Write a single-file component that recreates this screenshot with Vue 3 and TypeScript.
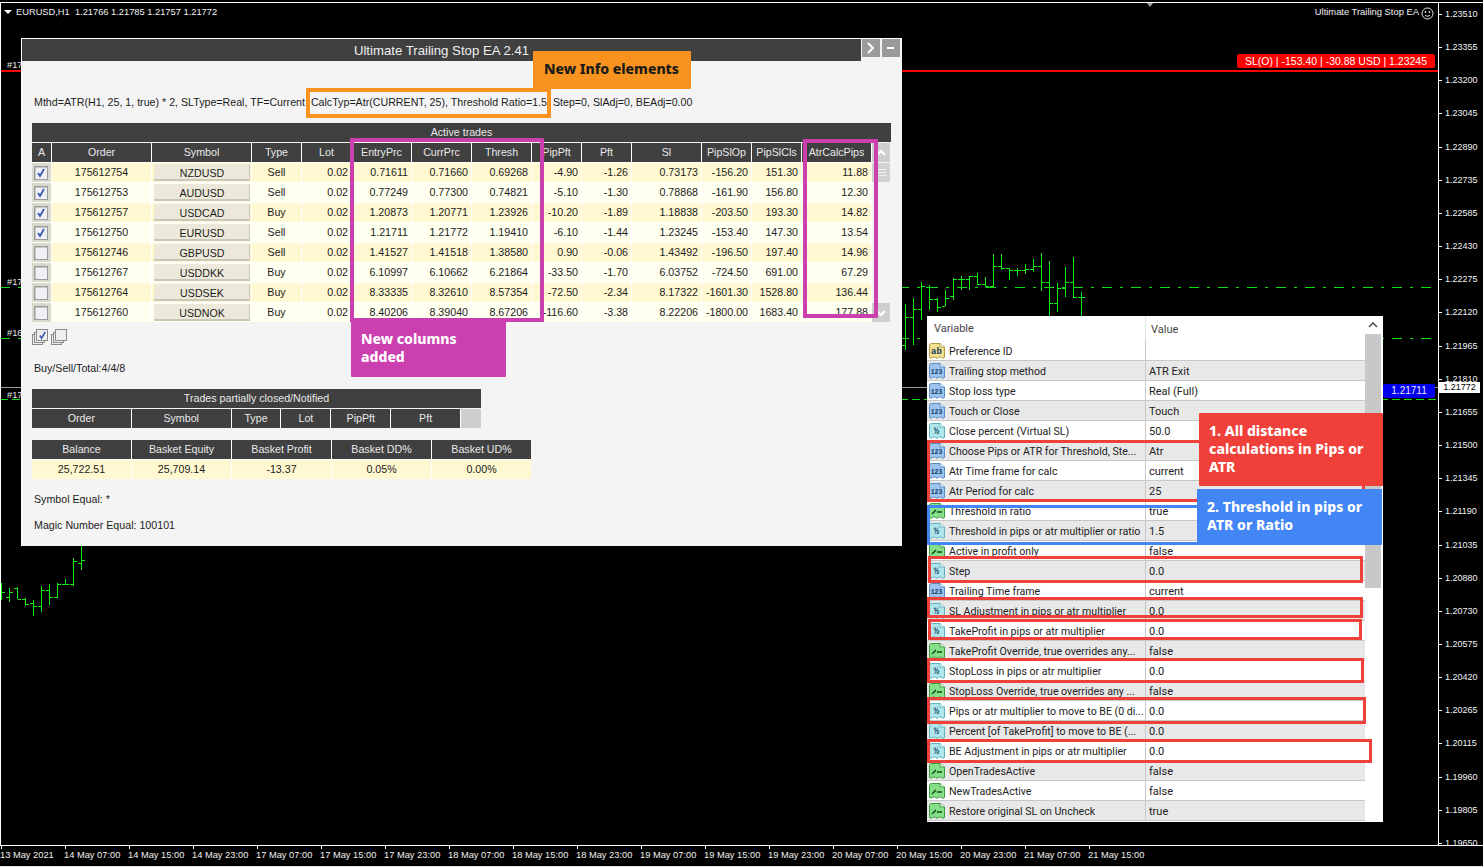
<script setup lang="ts">
type Bar = [number, number, number, number, number]
const bars: Bar[] = [
  [1, 583, 600, 592, 592], [9, 588, 602, 597, 592], [17, 587, 599, 588, 599], [25, 598, 606, 599, 604],
  [33, 600, 616, 603, 606], [41, 586, 612, 606, 590], [49, 584, 605, 590, 597], [57, 583, 598, 597, 584],
  [65, 579, 585, 584, 584], [73, 558, 586, 584, 561], [81, 540, 570, 563, 560], [110, 540, 546, 544, 544],
  [905, 304, 350, 345, 317], [913, 298, 345, 317, 309], [921, 282, 320, 309, 286], [929, 285, 310, 287, 299],
  [937, 298, 312, 299, 307], [945, 290, 306, 306, 298], [953, 278, 300, 296, 279], [961, 276, 290, 279, 279],
  [969, 276, 290, 279, 276], [977, 273, 285, 276, 284], [985, 277, 287, 284, 286], [993, 254, 287, 286, 266],
  [1001, 254, 270, 266, 268], [1009, 268, 280, 268, 270], [1017, 268, 276, 270, 270], [1025, 264, 274, 270, 269],
  [1033, 259, 272, 269, 266], [1041, 253, 291, 266, 282], [1049, 261, 316, 282, 303], [1057, 283, 312, 303, 288],
  [1065, 267, 297, 288, 282], [1073, 257, 298, 282, 297], [1081, 292, 316, 297, 297]
]
const barPath = bars
  .map(([x, h, l, o, c]) => `M${x + 0.5} ${h}V${l}M${x - 3} ${o + 0.5}H${x}M${x + 1} ${c + 0.5}H${x + 4}`)
  .join('')

const prices = ['1.23510','1.23355','1.23200','1.23045','1.22890','1.22735','1.22585','1.22430','1.22275','1.22120','1.21965','1.21810','1.21655','1.21500','1.21345','1.21190','1.21035','1.20880','1.20730','1.20575','1.20420','1.20265','1.20115','1.19960','1.19805','1.19650']
const times = ['13 May 2021','14 May 07:00','14 May 15:00','14 May 23:00','17 May 07:00','17 May 15:00','17 May 23:00','18 May 07:00','18 May 15:00','18 May 23:00','19 May 07:00','19 May 15:00','19 May 23:00','20 May 07:00','20 May 15:00','20 May 23:00','21 May 07:00','21 May 15:00']

const orderLabels = [
  { y: 59, text: '#17' }, { y: 276, text: '#17' }, { y: 327, text: '#16' }, { y: 389, text: '#17' }
]

const headers = ['A','Order','Symbol','Type','Lot','EntryPrc','CurrPrc','Thresh','PipPft','Pft','Sl','PipSlOp','PipSlCls','AtrCalcPips']
const trades = [
  { on: true, order: '175612754', sym: 'NZDUSD', type: 'Sell', nums: ['0.02','0.71611','0.71660','0.69268','-4.90','-1.26','0.73173','-156.20','151.30','11.88'] },
  { on: true, order: '175612753', sym: 'AUDUSD', type: 'Sell', nums: ['0.02','0.77249','0.77300','0.74821','-5.10','-1.30','0.78868','-161.90','156.80','12.30'] },
  { on: true, order: '175612757', sym: 'USDCAD', type: 'Buy', nums: ['0.02','1.20873','1.20771','1.23926','-10.20','-1.89','1.18838','-203.50','193.30','14.82'] },
  { on: true, order: '175612750', sym: 'EURUSD', type: 'Sell', nums: ['0.02','1.21711','1.21772','1.19410','-6.10','-1.44','1.23245','-153.40','147.30','13.54'] },
  { on: false, order: '175612746', sym: 'GBPUSD', type: 'Sell', nums: ['0.02','1.41527','1.41518','1.38580','0.90','-0.06','1.43492','-196.50','197.40','14.96'] },
  { on: false, order: '175612767', sym: 'USDDKK', type: 'Buy', nums: ['0.02','6.10997','6.10662','6.21864','-33.50','-1.70','6.03752','-724.50','691.00','67.29'] },
  { on: false, order: '175612764', sym: 'USDSEK', type: 'Buy', nums: ['0.02','8.33335','8.32610','8.57354','-72.50','-2.34','8.17322','-1601.30','1528.80','136.44'] },
  { on: false, order: '175612760', sym: 'USDNOK', type: 'Buy', nums: ['0.02','8.40206','8.39040','8.67206','-116.60','-3.38','8.22206','-1800.00','1683.40','177.88'] }
]
const closedHeaders = ['Order','Symbol','Type','Lot','PipPft','Pft']
const summaryHeaders = ['Balance','Basket Equity','Basket Profit','Basket DD%','Basket UD%']
const summaryValues = ['25,722.51','25,709.14','-13.37','0.05%','0.00%']

type Kind = 'ab' | 'int' | 'dbl' | 'bool'
const props: { name: string; value: string; kind: Kind }[] = [
  { name: 'Preference ID', value: '', kind: 'ab' },
  { name: 'Trailing stop method', value: 'ATR Exit', kind: 'int' },
  { name: 'Stop loss type', value: 'Real (Full)', kind: 'int' },
  { name: 'Touch or Close', value: 'Touch', kind: 'int' },
  { name: 'Close percent (Virtual SL)', value: '50.0', kind: 'dbl' },
  { name: 'Choose Pips or ATR for Threshold, Ste...', value: 'Atr', kind: 'int' },
  { name: 'Atr Time frame for calc', value: 'current', kind: 'int' },
  { name: 'Atr Period for calc', value: '25', kind: 'int' },
  { name: 'Threshold in ratio', value: 'true', kind: 'bool' },
  { name: 'Threshold in pips or atr multiplier or ratio', value: '1.5', kind: 'dbl' },
  { name: 'Active in profit only', value: 'false', kind: 'bool' },
  { name: 'Step', value: '0.0', kind: 'dbl' },
  { name: 'Trailing Time frame', value: 'current', kind: 'int' },
  { name: 'SL Adjustment in pips or atr multiplier', value: '0.0', kind: 'dbl' },
  { name: 'TakeProfit in pips or atr multiplier', value: '0.0', kind: 'dbl' },
  { name: 'TakeProfit Override, true overrides any...', value: 'false', kind: 'bool' },
  { name: 'StopLoss in pips or atr multiplier', value: '0.0', kind: 'dbl' },
  { name: 'StopLoss Override, true overrides any ...', value: 'false', kind: 'bool' },
  { name: 'Pips or atr multiplier to move to BE (0 di...', value: '0.0', kind: 'dbl' },
  { name: 'Percent [of TakeProfit] to move to BE (...', value: '0.0', kind: 'dbl' },
  { name: 'BE Adjustment in pips or atr multiplier', value: '0.0', kind: 'dbl' },
  { name: 'OpenTradesActive', value: 'false', kind: 'bool' },
  { name: 'NewTradesActive', value: 'false', kind: 'bool' },
  { name: 'Restore original SL on Uncheck', value: 'true', kind: 'bool' }
]

const iconFill: Record<Kind, string> = { ab: '#f2e08e', int: '#9cc4ee', dbl: '#aee6ea', bool: '#86e08a' }
const iconStroke: Record<Kind, string> = { ab: '#b09c48', int: '#5a8cc4', dbl: '#5fb3c0', bool: '#3b9c40' }
const iconText: Partial<Record<Kind, string>> = { ab: 'ab', int: '123', dbl: '½' }

const marks = [
  { c: 'm-red', l: 927, t: 440, w: 438, h: 62 }, { c: 'm-blue', l: 927, t: 505, w: 438, h: 40 },
  { c: 'm-red', l: 928, t: 556, w: 435, h: 27 }, { c: 'm-red', l: 927, t: 597, w: 436, h: 21 },
  { c: 'm-red', l: 928, t: 619, w: 434, h: 21 }, { c: 'm-red', l: 927, t: 658, w: 437, h: 25 },
  { c: 'm-red', l: 927, t: 697, w: 439, h: 27 }, { c: 'm-red', l: 927, t: 739, w: 445, h: 24 },
  { c: 'm-org', l: 306, t: 88, w: 245, h: 30 }, { c: 'm-pur', l: 350, t: 138, w: 194, h: 184 },
  { c: 'm-pur', l: 803, t: 139, w: 75, h: 179 }
]
const placed = (m: { l: number; t: number; w: number; h: number }) => ({
  left: m.l + 'px', top: m.t + 'px', width: m.w + 'px', height: m.h + 'px'
})
</script>

<template>
  <div class="desk">
    <svg class="plot" width="1483" height="867" viewBox="0 0 1483 867">
      <rect x="0" y="70" width="1438" height="2" fill="#ff0000" />
      <path d="M0 287.5H1438M0 338.5H1438" stroke="#11dd11" stroke-dasharray="10 8 3 8" fill="none" />
      <path d="M0 399.5H1438" stroke="#11dd11" stroke-dasharray="8 4" fill="none" />
      <path d="M0 387.5H1438" stroke="#9a9a9a" fill="none" />
      <path :d="barPath" stroke="#11ee11" fill="none" shape-rendering="crispEdges" />
      <path d="M1146 2h8l-4 5z" fill="#9a9a9a" />
    </svg>

    <div class="chart-grid">
      <div class="chart-area">
        <div class="quote">
          <span class="tri"></span>
          <span>EURUSD,H1&nbsp; 1.21766 1.21785 1.21757 1.21772</span>
        </div>
        <div class="ea-name">
          <span>Ultimate Trailing Stop EA</span>
          <svg class="smile" width="13" height="13" viewBox="0 0 13 13" fill="none" stroke="#e8e8e8">
            <circle cx="6.5" cy="6.5" r="5.5" />
            <circle cx="4.5" cy="5" r=".6" fill="#e8e8e8" />
            <circle cx="8.5" cy="5" r=".6" fill="#e8e8e8" />
            <path d="M4 8.5q2.500 1.500 5 0" />
          </svg>
        </div>
      </div>
      <div class="price-axis">
        <div v-for="p in prices" :key="p" class="price"><i></i>{{ p }}</div>
      </div>
      <div class="time-axis">
        <div v-for="t in times" :key="t" class="time"><i></i>{{ t }}</div>
      </div>
    </div>

    <div v-for="o in orderLabels" :key="o.y" class="order-label" :style="{ top: o.y + 'px' }">{{ o.text }}</div>
    <div class="sl-tag">SL(O) | -153.40 | -30.88 USD | 1.23245</div>
    <div class="entry-tag">1.21711</div>
    <div class="bid-tag">1.21772</div>

    <section class="panel">
      <div class="titlebar">
        <div class="title">Ultimate Trailing Stop EA 2.41</div>
        <div class="winbtn">
          <svg width="12" height="12" viewBox="0 0 12 12" fill="none" stroke="#fff" stroke-width="2"><path d="M3 1l5 5-5 5" /></svg>
        </div>
        <div class="winbtn">
          <svg width="12" height="12" viewBox="0 0 12 12" fill="none" stroke="#fff" stroke-width="2"><path d="M2 6h7" /></svg>
        </div>
      </div>
      <div class="panel-body">
        <div class="info">Mthd=ATR(H1, 25, 1, true) * 2, SLType=Real, TF=Current &nbsp;CalcTyp=Atr(CURRENT, 25), Threshold Ratio=1.5 &nbsp;Step=0, SlAdj=0, BEAdj=0.00</div>

        <div class="band active-band">Active trades</div>
        <div class="trades-wrap">
          <div class="trades">
            <div v-for="h in headers" :key="h" class="hd">{{ h }}</div>
            <template v-for="(t, i) in trades" :key="t.order">
              <div class="chk-cell">
                <span class="chk">
                  <svg v-if="t.on" width="10" height="10" viewBox="0 0 10 10" fill="none" stroke="#3a5cb4" stroke-width="1.800"><path d="M2 5l2 3L8 1" /></svg>
                </span>
              </div>
              <div class="cell c" :class="i % 2 ? 'even' : 'odd'">{{ t.order }}</div>
              <div class="sym-cell" :class="i % 2 ? 'even' : 'odd'"><span class="sym">{{ t.sym }}</span></div>
              <div class="cell c" :class="i % 2 ? 'even' : 'odd'">{{ t.type }}</div>
              <div v-for="(n, j) in t.nums" :key="j" class="cell r" :class="i % 2 ? 'even' : 'odd'">{{ n }}</div>
            </template>
          </div>
          <div class="vscroll">
            <div class="sbtn">
              <svg width="10" height="8" viewBox="0 0 10 8" fill="none" stroke="#fff" stroke-width="2"><path d="M1 6l4-4 4 4" /></svg>
            </div>
            <div class="sthumb"><i></i><i></i><i></i></div>
            <div class="strack"></div>
            <div class="sbtn">
              <svg width="10" height="8" viewBox="0 0 10 8" fill="none" stroke="#fff" stroke-width="2"><path d="M1 2l4 4 4-4" /></svg>
            </div>
          </div>
        </div>

        <div class="tools">
          <div class="tool"><span class="sq s3"></span><span class="sq s2"></span><span class="sq s1">
            <svg width="9" height="9" viewBox="0 0 10 10" fill="none" stroke="#3a5cb4" stroke-width="1.800"><path d="M2 5l2 3L8 1" /></svg></span></div>
          <div class="tool"><span class="sq s3"></span><span class="sq s2"></span><span class="sq s1"></span></div>
        </div>

        <div class="note totals">Buy/Sell/Total:4/4/8</div>

        <div class="closed">
          <div class="band closed-band">Trades partially closed/Notified</div>
          <div class="closed-head">
            <div v-for="h in closedHeaders" :key="h" class="hd">{{ h }}</div>
            <div class="blank"></div>
          </div>
        </div>

        <div class="summary">
          <div v-for="h in summaryHeaders" :key="h" class="hd">{{ h }}</div>
          <div v-for="v in summaryValues" :key="v" class="cell c odd">{{ v }}</div>
        </div>

        <div class="note sym-eq">Symbol Equal: *</div>
        <div class="note magic">Magic Number Equal: 100101</div>
      </div>
    </section>

    <section class="props">
      <div class="props-main">
        <div class="props-head">
          <div class="pcol-a">Variable</div>
          <div class="pcol-b">Value</div>
        </div>
        <div v-for="(p, i) in props" :key="p.name" class="prow" :class="{ grey: i % 2 === 1 }">
          <div class="pcol-a">
            <svg class="ico" width="16" height="18" viewBox="0 0 16 18">
              <path d="M2.500 1.500H11L15.500 5V15.500Q14 17 12.500 15.500T9.500 15.500 6.500 15.500 3.500 15.500 .5 15.500V3.500Q.5 1.500 2.500 1.500Z" :fill="iconFill[p.kind]" :stroke="iconStroke[p.kind]" />
              <path d="M11 1.500V5H15.500" fill="#fff" :stroke="iconStroke[p.kind]" />
              <path v-if="p.kind === 'bool'" d="M3 12L7 8M8 10H13" fill="none" stroke="#0f4a14" stroke-width="1.500" />
              <text v-else x="7.500" y="12" text-anchor="middle" class="ico-text" :class="{ wide: p.kind === 'ab' || p.kind === 'dbl' }">{{ iconText[p.kind] }}</text>
            </svg>
            <span class="pname">{{ p.name }}</span>
          </div>
          <div class="pcol-b">{{ p.value }}</div>
        </div>
      </div>
      <div class="props-scroll">
        <div class="pup">
          <svg width="10" height="8" viewBox="0 0 10 8" fill="none" stroke="#555" stroke-width="1.600"><path d="M1 6l4-4 4 4" /></svg>
        </div>
        <div class="pthumb"></div>
      </div>
    </section>

    <div v-for="(m, i) in marks" :key="i" class="mark" :class="m.c" :style="placed(m)"></div>

    <div class="callout c-org">New Info elements</div>
    <div class="callout c-pur">New columns<br />added</div>
    <div class="callout c-red">1. All distance<br />calculations in Pips or<br />ATR</div>
    <div class="callout c-blu">2. Threshold in pips or<br />ATR or Ratio</div>
  </div>
</template>

<style>
html, body { margin: 0; background: #000; }
</style>

<style scoped>
.desk {
  position: relative;
  width: 1483px;
  height: 867px;
  overflow: hidden;
  background: #000;
  font-family: "Liberation Sans", Arial, sans-serif;
  font-size: 10.67px;
  color: #1c1c1c;
}
.plot { position: absolute; left: 0; top: 0; }

.chart-grid {
  position: absolute;
  left: 0;
  top: 2px;
  width: 1483px;
  height: 864px;
  display: grid;
  grid-template-columns: 1438px 45px;
  grid-template-rows: 843px 21px;
  color: #f2f2f2;
  font-size: 9.300px;
  border-bottom: 1px solid #e4e4e4;
}
.chart-area {
  grid-column: 1;
  grid-row: 1;
  border-top: 1px solid #fff;
  border-left: 1px solid #fff;
  display: flex;
  justify-content: space-between;
  align-items: flex-start;
  padding: 2px 4px 0 3px;
  box-sizing: border-box;
}
.quote { display: flex; align-items: center; gap: 4px; height: 13px; font-size: 9.300px; }
.tri { width: 0; height: 0; border: 4px solid transparent; border-top: 4px solid #fff; border-bottom: 0; }
.ea-name { display: flex; align-items: center; gap: 2px; height: 13px; font-size: 9.400px; }
.smile { margin-top: 3px; }
.price-axis {
  grid-column: 2;
  grid-row: 1;
  border-top: 1px solid #fff;
  border-left: 1px solid #fff;
  box-sizing: border-box;
  padding-top: 5px;
}
.price {
  position: relative;
  height: 33.16px;
  line-height: 12px;
  padding-left: 6px;
  font-size: 9px;
}
.price i { position: absolute; left: 0; top: 6px; width: 3px; height: 1px; background: #fff; }
.time-axis {
  grid-column: 1 / span 2;
  grid-row: 2;
  display: flex;
  border-top: 1px solid #fff;
}
.time {
  position: relative;
  width: 64px;
  flex: none;
  padding-top: 3px;
  line-height: 12px;
  white-space: nowrap;
}
.time i { position: absolute; left: 1px; top: 0; width: 1px; height: 3px; background: #fff; }

.order-label { position: absolute; left: 7px; color: #e8e8e8; font-size: 9.300px; line-height: 12px; }
.sl-tag {
  position: absolute; left: 1237px; top: 54px; width: 198px; height: 14px;
  background: #f00; color: #fff; border-radius: 2px; text-align: center;
  line-height: 14px; font-size: 10.500px;
}
.entry-tag {
  position: absolute; left: 1383px; top: 384px; width: 52px; height: 14px;
  background: #0000ee; color: #eee; border-radius: 2px; text-align: center; line-height: 14px; font-size: 10px;
}
.bid-tag {
  position: absolute; left: 1439px; top: 382px; width: 41px; height: 11px;
  background: #fff; color: #000; font-size: 9px; line-height: 11px; text-align: center;
}

.panel {
  position: absolute; left: 21px; top: 38px; width: 881px; height: 508px;
  background: #f4f4f4; border-top: 1px solid #fff; border-left: 1px solid #fff;
  box-sizing: border-box;
  overflow: hidden;
}
.titlebar { display: flex; align-items: flex-start; height: 22px; }
.title {
  width: 839px; height: 22px; background: #404040; color: #f0f0f0;
  text-align: center; font-size: 13.200px; line-height: 23px;
  flex: none;
}
.winbtn {
  width: 18px; height: 18px; background: #9a9a9a; margin-left: 1px; flex: none;
  display: flex; align-items: center; justify-content: center; margin-right: 1px;
}
.panel-body { padding: 0 0 0 10px; }
.info { height: 62px; line-height: 14px; padding: 34px 0 0 2px; box-sizing: border-box; white-space: pre-wrap; }
.band { background: #404040; color: #e8e8e8; text-align: center; height: 19px; line-height: 19px; }
.active-band { width: 859px; }
.trades-wrap { display: flex; gap: 1px; margin-top: 1px; background: #fff; width: 858px; }
.trades {
  display: grid;
  grid-template-columns: 19px 99px 99px 49px 49px 59px 59px 59px 49px 49px 69px 49px 49px 69px;
  grid-auto-rows: 19px;
  gap: 1px;
  background: #fff;
}
.hd { background: #404040; color: #e8e8e8; text-align: center; line-height: 19px; height: 19px; overflow: hidden; white-space: nowrap; }
.cell { line-height: 19px; white-space: nowrap; }
.c { text-align: center; }
.r { text-align: right; padding-right: 3px; }
.odd { background: #fff8d0; }
.even { background: #fffff0; }
.chk-cell {
  background: #d8d8cc;
  display: flex; align-items: center; justify-content: flex-start; padding: 1px 0 0 2px;
  box-sizing: border-box;
}
.chk {
  width: 12px; height: 12px; background: #eef0f6; border: 1px solid #9a9a9a;
  box-shadow: inset 1px 1px 0 #c8c8c8; display: flex; align-items: center; justify-content: center;
}
.sym-cell { padding: 1px; box-sizing: border-box; }
.sym {
  display: block; height: 17px; line-height: 18px; text-align: center; background: #ece9da;
  box-shadow: inset -1px -2px 0 #c9c7b8; margin-left: 1px;
}
.vscroll { width: 18px; display: flex; flex-direction: column; background: #f4f4f4; }
.sbtn { height: 19px; background: #cfcfcf; display: flex; align-items: center; justify-content: center; }
.sthumb {
  height: 19px; background: #d2d2d2; margin-top: 1px; display: flex; flex-direction: column;
  align-items: center; justify-content: center; gap: 2px;
}
.sthumb i { width: 9px; height: 1px; background: #f2f2f2; }
.strack { flex: 1; margin-top: 1px; }
.tools { display: flex; gap: 3px; height: 17px; margin-top: 7px; }
.tool { position: relative; width: 16px; height: 17px; }
.sq { position: absolute; width: 9px; height: 9px; background: #eee; border: 1px solid #8b8b8b; display: flex; align-items: center; justify-content: center; }
.s3 { left: 0; top: 5px; }
.s2 { left: 2px; top: 3px; }
.s1 { left: 4px; top: 0; width: 10px; height: 10px; }
.note { padding-left: 2px; line-height: 13px; }
.totals { margin-top: 16px; }
.closed { margin-top: 14px; width: 449px; }
.closed-head { display: flex; gap: 1px; margin-top: 1px; background: #fff; }
.closed-band { width: 449px; }
.closed-head .hd:nth-child(1), .closed-head .hd:nth-child(2) { width: 99px; }
.closed-head .hd:nth-child(3), .closed-head .hd:nth-child(4) { width: 49px; }
.closed-head .hd:nth-child(5) { width: 59px; }
.closed-head .hd:nth-child(6) { width: 69px; }
.blank { background: #cfcfcf; width: 20px; }
.summary {
  display: grid; grid-template-columns: repeat(5, 99px); grid-auto-rows: 19px; gap: 1px;
  background: #fff; width: 499px; margin-top: 12px;
}
.sym-eq { margin-top: 14px; }
.magic { margin-top: 13px; }

.props {
  position: absolute; left: 927px; top: 316px; width: 456px; height: 506px;
  background: #fff; display: flex; overflow: hidden;
  font-family: Roboto, "Liberation Sans", sans-serif;
  font-size: 11px; color: #222;
}
.props-main { width: 438px; flex: none; }
.props-head { display: flex; height: 25px; line-height: 28px; color: #444; }
.props-head .pcol-a { padding-left: 7px; }
.props-head .pcol-b { padding-left: 5px; border-left: 1px solid #e0e0e0; }
.prow { display: flex; height: 20px; border-bottom: 1px solid #c8c8c8; box-sizing: border-box; line-height: 21px; }
.prow.grey { background: #e8e8e8; }
.pcol-a { width: 218px; flex: none; display: flex; align-items: center; box-sizing: border-box; white-space: nowrap; }
.pname { font-size: 10.600px; margin-top: 2px; }
.pcol-b { flex: 1; border-left: 1px solid #c8c8c8; padding-left: 3px; }
.ico { flex: none; margin: 0 4px 0 2px; }
.ico-text { font-size: 6.500px; font-weight: 700; fill: #123a66; font-family: "Liberation Mono", monospace; }
.ico-text.wide { font-size: 9px; }
.props-scroll { width: 16px; flex: none; display: flex; flex-direction: column; }
.pup { height: 18px; display: flex; align-items: center; justify-content: center; }
.pthumb { height: 254px; background: #c8c8c8; }

.mark { position: absolute; box-sizing: border-box; pointer-events: none; }
.m-red { border: 3px solid #f0403a; }
.m-blue { border: 3px solid #4285f4; }
.m-org { border: 4px solid #f7931e; }
.m-pur { border: 4px solid #cc3fae; }

.callout {
  position: absolute; box-sizing: border-box; font-family: "Noto Sans", sans-serif;
  font-weight: 800; font-size: 14px; line-height: 18px; border-radius: 1px;
}
.c-org { left: 533px; top: 51px; width: 158px; height: 38px; background: #f7931e; color: #1a1a1a; padding: 9px 0 0 11px; }
.c-pur { left: 351px; top: 321px; width: 155px; height: 56px; background: #cc3fae; color: #fff; padding: 9px 0 0 10px; }
.c-red { left: 1199px; top: 413px; width: 184px; height: 73px; background: #f0403a; color: #fff; padding: 9px 0 0 10px; }
.c-blu { left: 1197px; top: 489px; width: 185px; height: 56px; background: #4285f4; color: #fff; padding: 9px 0 0 10px; }
</style>
